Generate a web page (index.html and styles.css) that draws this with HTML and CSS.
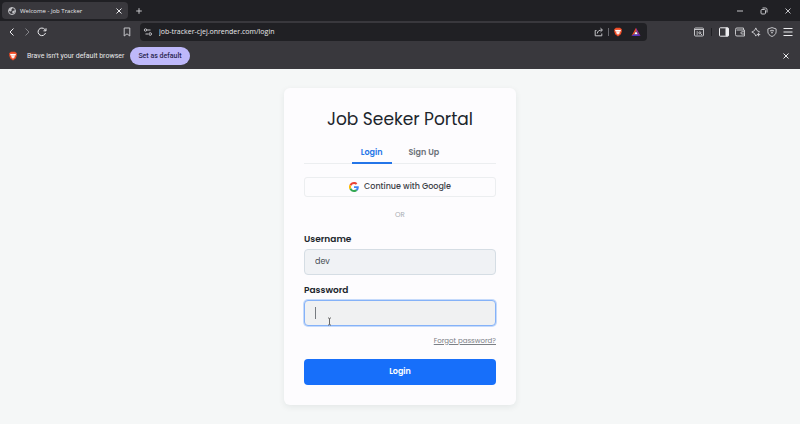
FILE: index.html
```html
<!DOCTYPE html>
<html lang="en">
<head>
<meta charset="utf-8">
<meta name="viewport" content="width=device-width, initial-scale=1">
<title>Welcome - Job Tracker</title>
<link rel="stylesheet" href="styles.css">
</head>
<body>
<svg class="defs" aria-hidden="true">
  <symbol id="close" viewBox="0 0 10 10"><path d="M2.5 2.5l5 5m0-5l-5 5"/></symbol>
  <symbol id="brave" viewBox="0 0 12 12">
    <path fill="#f04b25" stroke="none" d="M3.5.8h5L9.7 2l1 .3-.4 1.5.4 1-1.2 4L6 11.5 2.500 8.800l-1.200-4 .4-1L1.300 2.300l1-.3z"/>
    <path fill="#fff" stroke="none" d="M3 3.300l1.800.3L6 3.300l1.200.3L9 3.300l.5 1.300-1.700 2 .2.900L6 9.300 4 7.500l.2-.9-1.700-2z"/>
    <path fill="#f04b25" stroke="none" d="M4 4.700l1.300.4L5 6.200zM8 4.700l-1.300.4.3 1.100zM5.400 7.300L6 7l.6.3-.6.500z"/>
  </symbol>
</svg>
<header class="browser">
  <div class="tab-strip">
    <div class="tab">
      <svg class="icon" viewBox="0 0 10 10"><circle cx="5" cy="5" r="3.500"/><path fill="currentColor" stroke="none" d="M2 3l2.500-1.500 1 1-1.200 1.300.4 1.200L3.200 5.500 2 4.800zM5.500 5l2.500-.7-.3 2L6 7.800 5.200 6.500z"/></svg>
      <span class="tab-title">Welcome - Job Tracker</span>
      <button class="icon-button" aria-label="Close tab"><svg class="icon bright"><use href="#close"/></svg></button>
    </div>
    <button class="icon-button new-tab" aria-label="New tab"><svg class="icon" viewBox="0 0 10 10"><path d="M5 2.200v5.600M2.200 5h5.600"/></svg></button>
    <div class="window-controls">
      <button class="icon-button" aria-label="Minimize"><svg class="icon" viewBox="0 0 10 10"><path d="M2 5h6"/></svg></button>
      <button class="icon-button" aria-label="Restore"><svg class="icon" viewBox="0 0 10 10"><rect x="2" y="3.500" width="4.500" height="4.500" rx="1"/><path d="M3.500 2h3a1.500 1.500 0 0 1 1.500 1.500v3"/></svg></button>
      <button class="icon-button" aria-label="Close window"><svg class="icon"><use href="#close"/></svg></button>
    </div>
  </div>
  <div class="toolbar">
    <nav class="history">
      <button class="icon-button" aria-label="Back"><svg class="icon bright" viewBox="0 0 10 10"><path d="M6.500 1.500L3 5l3.500 3.500"/></svg></button>
      <button class="icon-button" aria-label="Forward"><svg class="icon dim" viewBox="0 0 10 10"><path d="M3.500 1.500L7 5 3.500 8.500"/></svg></button>
      <button class="icon-button" aria-label="Reload"><svg class="icon bright" viewBox="0 0 10 10"><path d="M8.500 6A3.800 3.800 0 1 1 7.800 2.400L8.800 3.500M9 1.300v2.500H6.500"/></svg></button>
    </nav>
    <button class="icon-button bookmark" aria-label="Bookmark"><svg class="icon" viewBox="0 0 10 10"><path d="M2.200 1h5.600v8L5 6.800 2.200 9z"/></svg></button>
    <div class="address">
      <svg class="icon" viewBox="0 0 10 10"><circle cx="2.500" cy="3" r="1.200"/><path d="M4 3h3.500M2.500 7H5"/><circle cx="7.200" cy="7" r="1.300"/></svg>
      <input class="url" type="text" aria-label="Address" value="job-tracker-cjej.onrender.com/login">
      <button class="icon-button" aria-label="Share"><svg class="icon" viewBox="0 0 10 10"><path d="M2.500 3.500H1.200v5.300h6.600V6.500M3.300 6.500c.2-2.300 1.700-3.500 4.700-3.500M6.500 1.200L8.500 3l-2 1.900"/></svg></button>
      <span class="divider"></span>
      <button class="icon-button shield" aria-label="Shields"><svg class="icon"><use href="#brave"/></svg></button>
      <button class="icon-button" aria-label="Rewards"><svg class="icon" viewBox="0 0 10 10"><g stroke="none"><path fill="#f04b25" d="M5 .8v3L2.800 7.500.5 9z"/><path fill="#a02c9b" d="M5 .8v3l2.200 3.700L9.500 9z"/><path fill="#5530bd" d="M.5 9l2.300-1.800h4.400L9.500 9z"/><path fill="#fff" d="M5 4.200l1.800 3.100H3.200z"/></g></svg></button>
    </div>
    <div class="tools">
      <button class="icon-button" aria-label="Search tabs"><svg class="icon" viewBox="0 0 10 10"><rect x=".5" y="1" width="9" height="8" rx="1"/><path d="M.5 2.500h9M2.500 5h1.500M2.500 7h1.500M6.500 6.500L8 8"/><circle cx="5.800" cy="5.800" r="1"/></svg></button>
      <span class="divider dark"></span>
      <button class="icon-button" aria-label="Sidebar"><svg class="icon bright" viewBox="0 0 10 10"><rect x=".5" y=".8" width="9" height="8.400" rx=".8"/><path fill="currentColor" d="M7 1.200h2v7.600H7z"/></svg></button>
      <button class="icon-button" aria-label="Wallet"><svg class="icon" viewBox="0 0 10 10"><path d="M8.500 3V1H2A1.400 1.400 0 0 0 .5 2.500v5A1.400 1.400 0 0 0 2 9h7.500V3H1.500M9.300 4.800H7a1.100 1.100 0 0 0 0 2.200h2.300"/></svg></button>
      <button class="icon-button" aria-label="Leo"><svg class="icon" viewBox="0 0 10 10"><path d="M5.500 8.200l-.7.900-1.300-2.600L.8 5l2.700-1.400L4.800.9l1.300 2.700L8.800 5"/><path fill="currentColor" stroke="none" d="M7.500 5.300l.7 1.500 1.500.7-1.500.7-.7 1.500-.7-1.500-1.500-.7 1.500-.7z"/></svg></button>
      <button class="icon-button" aria-label="VPN"><svg class="icon" viewBox="0 0 10 10"><path d="M5 .6l4.100 1.300v3c0 2-1.600 3.600-4.100 4.600C2.500 8.500.9 6.900.9 4.900v-3zM3 4a3 3 0 0 1 4 0M4 5.500a1.500 1.500 0 0 1 2 0M5 6.500v.5"/></svg></button>
      <button class="icon-button" aria-label="Menu"><svg class="icon bright" viewBox="0 0 10 10"><path d="M.5 1.500h9M.5 5h9M.5 8.500h9"/></svg></button>
    </div>
  </div>
  <div class="infobar">
    <svg class="icon"><use href="#brave"/></svg>
    <span class="notice">Brave isn’t your default browser</span>
    <button class="default-button">Set as default</button>
    <button class="icon-button dismiss" aria-label="Dismiss"><svg class="icon bright"><use href="#close"/></svg></button>
  </div>
</header>
<main class="page">
  <section class="card">
    <h1>Job Seeker Portal</h1>
    <div class="auth-tabs">
      <button class="auth-tab active">Login</button>
      <button class="auth-tab">Sign Up</button>
    </div>
    <button class="google">
      <svg class="google-logo" viewBox="0 0 48 48"><path fill="#ea4335" d="M24 9.500c3.500 0 6.700 1.200 9.200 3.600l6.900-6.900C35.900 2.400 30.500 0 24 0 14.600 0 6.500 5.400 2.600 13.200l8 6.200C12.400 13.700 17.700 9.500 24 9.500z"/><path fill="#4285f4" d="M47 24.600c0-1.600-.2-3.100-.4-4.600H24v9h12.900c-.6 3-2.300 5.500-4.800 7.200l7.700 6C44.400 38 47 32 47 24.600z"/><path fill="#fbbc05" d="M10.500 28.600a14.500 14.500 0 0 1 0-9.200l-8-6.200a24 24 0 0 0 0 21.600z"/><path fill="#34a853" d="M24 48c6.500 0 11.900-2.100 15.900-5.800l-7.700-6c-2.200 1.500-4.900 2.300-8.200 2.300-6.300 0-11.600-4.200-13.500-9.900l-8 6.200C6.500 42.600 14.600 48 24 48z"/></svg>
      <span>Continue with Google</span>
    </button>
    <p class="or">OR</p>
    <form class="login-form">
      <label for="username">Username</label>
      <input id="username" class="field" type="text" value="dev">
      <label for="password">Password</label>
      <div class="password-wrap">
        <input id="password" class="field focused" type="password">
        <span class="caret"></span>
        <svg class="cursor" viewBox="0 0 5 9"><path d="M1 1h1l.5.5L3 1h1M2.500 1.500v6M1 8h1l.5-.5L3 8h1"/></svg>
      </div>
      <a class="forgot" href="#">Forgot password?</a>
      <button class="submit" type="button">Login</button>
    </form>
  </section>
</main>
</body>
</html>
```
FILE: styles.css
```css
* {
  box-sizing: border-box;
}

body {
  display: flex;
  flex-direction: column;
  min-height: 100vh;
  margin: 0;
  background: #f5f7f7;
  color: #20252b;
  font-family: Poppins, Inter, sans-serif;
  font-size: 8px;
}

button,
input {
  margin: 0;
  padding: 0;
  border: 0;
  background: none;
  color: inherit;
  font: inherit;
  outline: none;
}

.defs {
  position: absolute;
  width: 0;
  height: 0;
}

.browser {
  background: #39383d;
  color: #e8e8ea;
  font-family: "Segoe UI", "Open Sans", sans-serif;
  font-size: 7px;
}

.icon {
  display: block;
  flex: none;
  width: 10px;
  height: 10px;
  fill: none;
  stroke: currentColor;
  color: #c4c4c8;
}

.bright {
  color: #ededf0;
}

.dim {
  color: #85858a;
}

.icon-button {
  flex: none;
}

.tab-strip,
.toolbar,
.infobar,
.tab,
.address,
.window-controls,
.history,
.tools {
  display: flex;
  align-items: center;
}

.tab-strip {
  height: 21px;
  padding: 0 7px 0 2px;
  background: #202024;
}

.tab {
  width: 126px;
  height: 17px;
  padding: 0 4px 0 5px;
  gap: 3px;
  border-radius: 4px;
  background: #39383d;
}

.tab-title {
  flex: 1;
  font-size: 6px;
  white-space: nowrap;
}

.new-tab {
  margin-left: 6px;
}

.window-controls {
  margin-left: auto;
  gap: 14px;
}

.toolbar {
  height: 21px;
  padding: 0 7px;
}

.history {
  gap: 5px;
}

.bookmark {
  margin-left: 75px;
}

.address {
  flex: 1;
  height: 18px;
  margin-left: 8px;
  padding: 0 6px 0 3px;
  gap: 6px;
  border-radius: 4px;
  background: #202024;
}

.url {
  flex: 1;
  min-width: 0;
}

.divider {
  width: 1px;
  height: 8px;
  margin: 0 -2px;
  background: #69696f;
}

.dark {
  margin: 0 1px;
  background: #202024;
}

.shield {
  margin-right: 2px;
}

.tools {
  margin-left: 47px;
  gap: 6px;
}

.infobar {
  height: 27px;
  padding: 0 9px 0 8px;
  font-family: Roboto, sans-serif;
}

.notice {
  margin-left: 9px;
}

.default-button {
  height: 18px;
  margin-left: 6px;
  padding: 0 8px;
  border-radius: 9px;
  background: #beb8fa;
  color: #29264f;
  font-weight: 500;
}

.dismiss {
  margin-left: auto;
}

.page {
  display: flex;
  flex: 1;
  align-items: flex-start;
  justify-content: center;
  padding: 19px 16px;
}

.card {
  width: 100%;
  max-width: 232px;
  padding: 20px;
  border-radius: 6px;
  background: #fdfcfe;
  box-shadow: 0 2px 6px rgb(30 50 50 / 8%);
}

h1 {
  margin: 0;
  font-size: 17px;
  font-weight: 400;
  line-height: 22px;
  text-align: center;
}

.auth-tabs {
  display: flex;
  justify-content: center;
  gap: 8px;
  margin-top: 10px;
  border-bottom: 1px solid #eceef0;
}

.auth-tab {
  height: 24px;
  margin-bottom: -1px;
  padding: 4px 9px 0;
  border-bottom: 2px solid transparent;
  color: #6b7178;
  font-weight: 600;
}

.active {
  border-color: #2475e8;
  color: #2475e8;
}

.google {
  display: flex;
  align-items: center;
  justify-content: center;
  gap: 5px;
  width: 100%;
  height: 20px;
  margin-top: 13px;
  border: 1px solid #eceef0;
  border-radius: 3px;
  color: #3c4147;
  font-weight: 500;
}

.google-logo {
  width: 10px;
  height: 10px;
}

.or {
  margin: 12px 0;
  color: #a9adb2;
  font-size: 7px;
  line-height: 12px;
  text-align: center;
}

.login-form {
  display: flex;
  flex-direction: column;
}

label {
  margin-bottom: 4px;
  font-size: 9px;
  font-weight: 600;
  line-height: 12px;
}

.field {
  width: 100%;
  height: 26px;
  margin-bottom: 9px;
  padding: 0 10px;
  border: 1px solid #d5dde4;
  border-radius: 4px;
  background: #f0f2f5;
  color: #454b52;
}

.password-wrap {
  position: relative;
  display: flex;
}

.focused {
  border-color: #85b2f8;
  background: #f0f1f2;
  box-shadow: 0 0 0 1px #c5dafb;
}

.caret {
  position: absolute;
  top: 7px;
  left: 11px;
  width: 1px;
  height: 12px;
  background: #777b80;
}

.cursor {
  position: absolute;
  top: 17px;
  left: 23px;
  width: 5px;
  height: 9px;
  fill: none;
  stroke: #666;
}

.forgot {
  align-self: flex-end;
  color: #7b8086;
  font-size: 7px;
  line-height: 12px;
}

.submit {
  height: 26px;
  margin-top: 12px;
  border-radius: 4px;
  background: #176ffa;
  color: #fff;
  font-weight: 600;
}
```
